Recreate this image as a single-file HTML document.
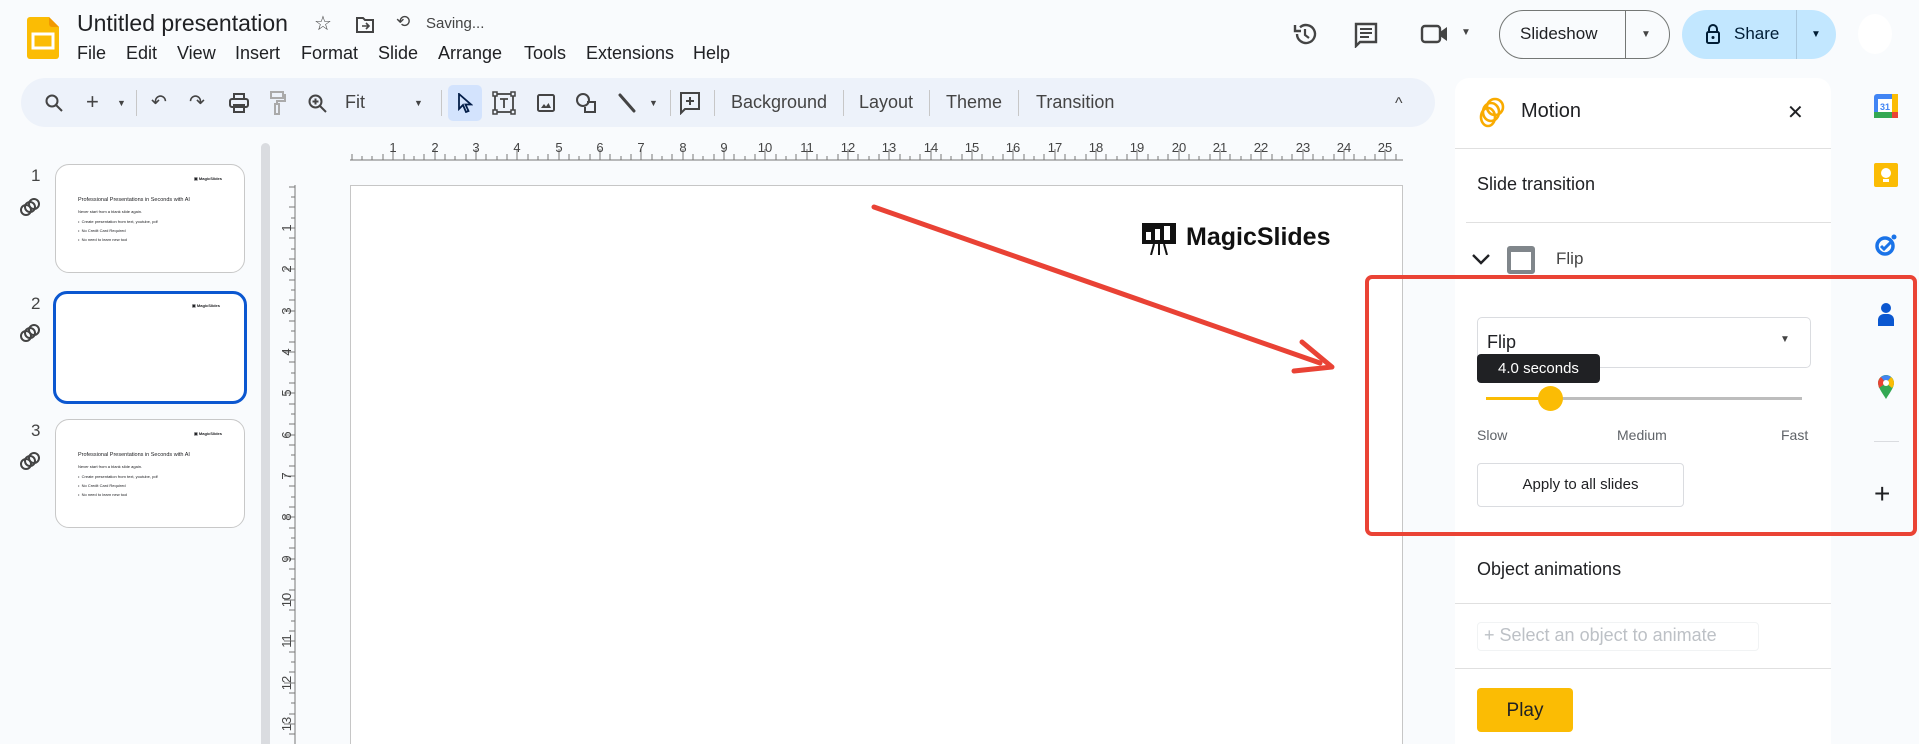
<!DOCTYPE html>
<html style="width:1919px;height:744px;overflow:hidden"><head><meta charset="utf-8"><style>
*{margin:0;padding:0;box-sizing:border-box}
body{width:1919px;height:744px;overflow:hidden;background:#f9fbfd;font-family:"Liberation Sans",Arial,sans-serif;color:#202124;position:relative}
.a{position:absolute}
.t{position:absolute;white-space:nowrap}
.m{position:absolute;top:43px;font-size:18px;color:#202124;white-space:nowrap}
.sep{position:absolute;top:90px;width:1px;height:26px;background:#c7c7c7}
.ic{position:absolute}
.thumb{position:absolute;left:55px;width:190px;height:109px;background:#fff;border:1px solid #c8c8c8;border-radius:14px;overflow:hidden}
.thumb .l{position:absolute;left:138px;top:11px;font-size:4px;font-weight:bold}
.thumb .h{position:absolute;left:22px;top:32px;font-size:5.5px}
.thumb .s{position:absolute;left:22px;font-size:4px}
.hr{position:absolute;left:1455px;width:376px;height:1px;background:#e0e0e0}
</style></head><body>

<svg class="a" style="left:27px;top:17px" width="32" height="42" viewBox="0 0 32 42"><path d="M3 0h19l10 10v29a3 3 0 0 1-3 3H3a3 3 0 0 1-3-3V3a3 3 0 0 1 3-3z" fill="#fbbc04"/><path d="M22 0l10 10h-7a3 3 0 0 1-3-3z" fill="#f29900"/><rect x="6" y="17" width="20" height="14" fill="none" stroke="#fff" stroke-width="3"/></svg>
<div class="t" style="left:77px;top:10px;font-size:23px;color:#202124">Untitled presentation</div>
<div class="t" style="left:314px;top:11px;font-size:20px;color:#444">☆</div>
<svg class="a" style="left:355px;top:16px" width="20" height="18" viewBox="0 0 20 18"><path d="M2 2h6l2 2h8v12H2z" fill="none" stroke="#444" stroke-width="2"/><path d="M7 10h6M11 7l3 3-3 3" stroke="#444" stroke-width="1.6" fill="none"/></svg>
<div class="t" style="left:396px;top:12px;font-size:17px;color:#444">⟲</div>
<div class="t" style="left:426px;top:15px;font-size:15px;color:#444">Saving...</div>
<div class="m" style="left:77px">File</div>
<div class="m" style="left:126px">Edit</div>
<div class="m" style="left:177px">View</div>
<div class="m" style="left:235px">Insert</div>
<div class="m" style="left:301px">Format</div>
<div class="m" style="left:378px">Slide</div>
<div class="m" style="left:438px">Arrange</div>
<div class="m" style="left:524px">Tools</div>
<div class="m" style="left:586px">Extensions</div>
<div class="m" style="left:693px">Help</div>

<svg class="a" style="left:1292px;top:21px" width="26" height="26" viewBox="0 0 26 26"><path d="M5 13a9 9 0 1 0 3-6.7" fill="none" stroke="#444" stroke-width="2.4"/><path d="M3 4v6h6" fill="none" stroke="#444" stroke-width="2.4"/><path d="M13 8v6l4 3" fill="none" stroke="#444" stroke-width="2.2"/></svg>
<svg class="a" style="left:1354px;top:22px" width="24" height="26" viewBox="0 0 24 26"><path d="M2 2h20v18H6l-4 4z" fill="none" stroke="#444" stroke-width="2.4"/><path d="M6 7h12M6 11h12M6 15h9" stroke="#444" stroke-width="2"/></svg>
<svg class="a" style="left:1420px;top:24px" width="34" height="20" viewBox="0 0 34 20"><rect x="2" y="2" width="18" height="16" rx="3" fill="none" stroke="#444" stroke-width="2.4"/><path d="M20 8l7-5v14l-7-5z" fill="#444"/></svg>
<div class="t" style="left:1461px;top:27px;font-size:10px;color:#444">▼</div>
<div class="a" style="left:1499px;top:10px;width:171px;height:49px;border:1px solid #747775;border-radius:25px"></div>
<div class="a" style="left:1625px;top:10px;width:1px;height:49px;background:#747775"></div>
<div class="t" style="left:1520px;top:24px;font-size:17px;color:#202124">Slideshow</div>
<div class="t" style="left:1641px;top:29px;font-size:10px;color:#444">▼</div>
<div class="a" style="left:1682px;top:10px;width:154px;height:49px;background:#c2e7ff;border-radius:25px"></div>
<div class="a" style="left:1796px;top:10px;width:1px;height:49px;background:#a8c7dd"></div>
<svg class="a" style="left:1705px;top:23px" width="16" height="22" viewBox="0 0 16 22"><path d="M4 9V6a4 4 0 0 1 8 0v3" fill="none" stroke="#001d35" stroke-width="2"/><rect x="2" y="9" width="12" height="11" rx="1.5" fill="none" stroke="#001d35" stroke-width="2"/><circle cx="8" cy="14.5" r="1.5" fill="#001d35"/></svg>
<div class="t" style="left:1734px;top:24px;font-size:17px;color:#001d35">Share</div>
<div class="t" style="left:1811px;top:29px;font-size:10px;color:#001d35">▼</div>
<div class="a" style="left:1858px;top:14px;width:34px;height:40px;border-radius:50%;background:#fff"></div>

<div class="a" style="left:21px;top:78px;width:1414px;height:49px;background:#edf2fa;border-radius:25px"></div>
<svg class="ic" style="left:45px;top:94px" width="18" height="18" viewBox="0 0 18 18"><circle cx="7" cy="7" r="5.5" fill="none" stroke="#444" stroke-width="2"/><path d="M11 11l6 6" stroke="#444" stroke-width="2"/></svg>
<div class="t" style="left:86px;top:89px;font-size:22px;color:#444">+</div>
<div class="t" style="left:117px;top:98px;font-size:9px;color:#444">▼</div>
<div class="sep" style="left:136px"></div>
<div class="t" style="left:151px;top:91px;font-size:19px;color:#444">↶</div>
<div class="t" style="left:189px;top:91px;font-size:19px;color:#444">↷</div>
<svg class="ic" style="left:229px;top:93px" width="20" height="20" viewBox="0 0 20 20"><rect x="5" y="1" width="10" height="5" fill="none" stroke="#444" stroke-width="2"/><rect x="1" y="6" width="18" height="8" rx="2" fill="none" stroke="#444" stroke-width="2"/><rect x="5" y="12" width="10" height="7" fill="none" stroke="#444" stroke-width="2"/></svg>
<svg class="ic" style="left:270px;top:91px" width="16" height="24" viewBox="0 0 16 24"><rect x="1" y="1" width="12" height="6" fill="none" stroke="#aaa" stroke-width="2"/><path d="M13 4h2v6H7v3" fill="none" stroke="#aaa" stroke-width="2"/><rect x="5" y="13" width="4" height="10" fill="none" stroke="#aaa" stroke-width="2"/></svg>
<svg class="ic" style="left:308px;top:94px" width="19" height="19" viewBox="0 0 19 19"><circle cx="7.5" cy="7.5" r="6" fill="none" stroke="#444" stroke-width="2"/><path d="M12 12l6 6M7.5 4.5v6M4.5 7.5h6" stroke="#444" stroke-width="2"/></svg>
<div class="t" style="left:345px;top:92px;font-size:18px;color:#444">Fit</div>
<div class="t" style="left:414px;top:98px;font-size:9px;color:#444">▼</div>
<div class="sep" style="left:441px"></div>
<div class="a" style="left:448px;top:85px;width:34px;height:36px;background:#d3e3fd;border-radius:5px"></div>
<svg class="ic" style="left:457px;top:93px" width="16" height="20" viewBox="0 0 16 20"><path d="M2 1v15l4-4 3 7 2.5-1-3-6.5H14z" fill="none" stroke="#041e49" stroke-width="1.8"/></svg>
<svg class="ic" style="left:492px;top:91px" width="24" height="24" viewBox="0 0 24 24"><rect x="3" y="3" width="18" height="18" fill="none" stroke="#444" stroke-width="1.8"/><rect x="1" y="1" width="4" height="4" fill="#edf2fa" stroke="#444" stroke-width="1.5"/><rect x="19" y="1" width="4" height="4" fill="#edf2fa" stroke="#444" stroke-width="1.5"/><rect x="1" y="19" width="4" height="4" fill="#edf2fa" stroke="#444" stroke-width="1.5"/><rect x="19" y="19" width="4" height="4" fill="#edf2fa" stroke="#444" stroke-width="1.5"/><path d="M8 8h8M12 8v9" stroke="#444" stroke-width="1.8"/></svg>
<svg class="ic" style="left:536px;top:93px" width="20" height="20" viewBox="0 0 20 20"><rect x="2" y="2" width="16" height="16" rx="1.5" fill="none" stroke="#444" stroke-width="2"/><path d="M5 15l3-4 2 2.5 2.5-3.5L15 15z" fill="#444"/></svg>
<svg class="ic" style="left:575px;top:92px" width="22" height="22" viewBox="0 0 22 22"><circle cx="8" cy="8" r="6" fill="none" stroke="#444" stroke-width="2"/><path d="M12 10h8v10h-10v-5" fill="none" stroke="#444" stroke-width="2"/></svg>
<svg class="ic" style="left:617px;top:92px" width="20" height="22" viewBox="0 0 20 22"><path d="M3 3l14 16" stroke="#444" stroke-width="3" stroke-linecap="round"/></svg>
<div class="t" style="left:649px;top:98px;font-size:9px;color:#444">▼</div>
<div class="sep" style="left:670px"></div>
<svg class="ic" style="left:679px;top:91px" width="22" height="24" viewBox="0 0 22 24"><path d="M2 2h18v16H6l-4 4z" fill="none" stroke="#444" stroke-width="2"/><path d="M11 6v8M7 10h8" stroke="#444" stroke-width="2"/></svg>
<div class="sep" style="left:714px"></div>
<div class="t" style="left:731px;top:92px;font-size:18px;color:#444">Background</div>
<div class="sep" style="left:843px"></div>
<div class="t" style="left:859px;top:92px;font-size:18px;color:#444">Layout</div>
<div class="sep" style="left:929px"></div>
<div class="t" style="left:946px;top:92px;font-size:18px;color:#444">Theme</div>
<div class="sep" style="left:1018px"></div>
<div class="t" style="left:1036px;top:92px;font-size:18px;color:#444">Transition</div>
<div class="t" style="left:1395px;top:95px;font-size:16px;color:#444">^</div>

<div class="t" style="left:31px;top:166px;font-size:17px;color:#444">1</div>
<div class="t" style="left:31px;top:294px;font-size:17px;color:#444">2</div>
<div class="t" style="left:31px;top:421px;font-size:17px;color:#444">3</div>
<svg class="a" style="left:19px;top:197px" width="22" height="20" viewBox="0 0 22 20"><g fill="none" stroke="#444" stroke-width="2"><circle cx="7" cy="13" r="5"/><circle cx="11" cy="10" r="5"/><circle cx="15" cy="7" r="5"/></g></svg>
<svg class="a" style="left:19px;top:323px" width="22" height="20" viewBox="0 0 22 20"><g fill="none" stroke="#444" stroke-width="2"><circle cx="7" cy="13" r="5"/><circle cx="11" cy="10" r="5"/><circle cx="15" cy="7" r="5"/></g></svg>
<svg class="a" style="left:19px;top:451px" width="22" height="20" viewBox="0 0 22 20"><g fill="none" stroke="#444" stroke-width="2"><circle cx="7" cy="13" r="5"/><circle cx="11" cy="10" r="5"/><circle cx="15" cy="7" r="5"/></g></svg>
<div class="thumb" style="top:164px"><div class="l">▣ MagicSlides</div><div class="h">Professional Presentations in Seconds with AI</div><div class="s" style="top:44px">Never start from a blank slide again.</div><div class="s" style="top:54px">•&nbsp; Create presentation from text, youtube, pdf</div><div class="s" style="top:63px">•&nbsp; No Credit Card Required</div><div class="s" style="top:72px">•&nbsp; No need to learn new tool</div></div>
<div class="thumb" style="top:291px;border:3px solid #0b57d0;left:53px;width:194px;height:113px"><div class="l" style="top:9px;left:136px">▣ MagicSlides</div></div>
<div class="thumb" style="top:419px"><div class="l">▣ MagicSlides</div><div class="h">Professional Presentations in Seconds with AI</div><div class="s" style="top:44px">Never start from a blank slide again.</div><div class="s" style="top:54px">•&nbsp; Create presentation from text, youtube, pdf</div><div class="s" style="top:63px">•&nbsp; No Credit Card Required</div><div class="s" style="top:72px">•&nbsp; No need to learn new tool</div></div>
<div class="a" style="left:261px;top:143px;width:9px;height:601px;background:#dadce0;border-radius:5px 5px 0 0"></div>

<svg class="a" style="left:270px;top:130px" width="1190" height="614">
<g stroke="#777" stroke-width="1">
<line x1="80" y1="30" x2="1133" y2="30"/>
<line x1="25" y1="55" x2="25" y2="614"/>
</g>
<g stroke="#777">
<path d="M82 30v-6M92 30v-4M102 30v-4M113 30v-6M123 30v-11M134 30v-6M144 30v-4M154 30v-6M165 30v-11M175 30v-6M185 30v-4M196 30v-6M206 30v-11M216 30v-6M227 30v-4M237 30v-6M247 30v-11M258 30v-6M268 30v-4M278 30v-6M289 30v-11M299 30v-6M309 30v-4M320 30v-6M330 30v-11M340 30v-6M351 30v-4M361 30v-6M371 30v-11M382 30v-6M392 30v-4M402 30v-6M413 30v-11M423 30v-6M433 30v-4M444 30v-6M454 30v-11M464 30v-6M475 30v-4M485 30v-6M495 30v-11M506 30v-6M516 30v-4M526 30v-6M537 30v-11M547 30v-6M557 30v-4M568 30v-6M578 30v-11M588 30v-6M599 30v-4M609 30v-6M619 30v-11M630 30v-6M640 30v-4M650 30v-6M661 30v-11M671 30v-6M681 30v-4M692 30v-6M702 30v-11M712 30v-6M723 30v-4M733 30v-6M743 30v-11M754 30v-6M764 30v-4M774 30v-6M785 30v-11M795 30v-6M805 30v-4M816 30v-6M826 30v-11M836 30v-6M847 30v-4M857 30v-6M867 30v-11M878 30v-6M888 30v-4M898 30v-6M909 30v-11M919 30v-6M929 30v-4M940 30v-6M950 30v-11M960 30v-6M971 30v-4M981 30v-6M991 30v-11M1002 30v-6M1012 30v-4M1022 30v-6M1033 30v-11M1043 30v-6M1053 30v-4M1064 30v-6M1074 30v-11M1084 30v-6M1095 30v-4M1105 30v-6M1115 30v-11M1126 30v-6"/>
</g>
<g font-size="13" fill="#444" font-family="Liberation Sans" text-anchor="middle">
<text x="123" y="22">1</text><text x="165" y="22">2</text><text x="206" y="22">3</text><text x="247" y="22">4</text><text x="289" y="22">5</text><text x="330" y="22">6</text><text x="371" y="22">7</text><text x="413" y="22">8</text><text x="454" y="22">9</text><text x="495" y="22">10</text><text x="537" y="22">11</text><text x="578" y="22">12</text><text x="619" y="22">13</text><text x="661" y="22">14</text><text x="702" y="22">15</text><text x="743" y="22">16</text><text x="785" y="22">17</text><text x="826" y="22">18</text><text x="867" y="22">19</text><text x="909" y="22">20</text><text x="950" y="22">21</text><text x="991" y="22">22</text><text x="1033" y="22">23</text><text x="1074" y="22">24</text><text x="1115" y="22">25</text>
</g>
<g stroke="#777">
<path d="M25 57h-6M25 67h-4M25 77h-6M25 88h-4M25 98h-11M25 108h-6M25 119h-4M25 129h-6M25 139h-11M25 150h-6M25 160h-4M25 170h-6M25 181h-11M25 191h-6M25 201h-4M25 212h-6M25 222h-11M25 232h-6M25 243h-4M25 253h-6M25 263h-11M25 274h-6M25 284h-4M25 294h-6M25 305h-11M25 315h-6M25 325h-4M25 336h-6M25 346h-11M25 356h-6M25 367h-4M25 377h-6M25 387h-11M25 398h-6M25 408h-4M25 418h-6M25 429h-11M25 439h-6M25 449h-4M25 460h-6M25 470h-11M25 480h-6M25 491h-4M25 501h-6M25 511h-11M25 522h-6M25 532h-4M25 542h-6M25 553h-11M25 563h-6M25 573h-4M25 584h-6M25 594h-11M25 604h-6"/>
</g>
<g font-size="13" fill="#444" font-family="Liberation Sans" text-anchor="middle">
<text transform="translate(17,98) rotate(-90)" y="4">1</text><text transform="translate(17,139) rotate(-90)" y="4">2</text><text transform="translate(17,181) rotate(-90)" y="4">3</text><text transform="translate(17,222) rotate(-90)" y="4">4</text><text transform="translate(17,263) rotate(-90)" y="4">5</text><text transform="translate(17,305) rotate(-90)" y="4">6</text><text transform="translate(17,346) rotate(-90)" y="4">7</text><text transform="translate(17,387) rotate(-90)" y="4">8</text><text transform="translate(17,429) rotate(-90)" y="4">9</text><text transform="translate(17,470) rotate(-90)" y="4">10</text><text transform="translate(17,511) rotate(-90)" y="4">11</text><text transform="translate(17,553) rotate(-90)" y="4">12</text><text transform="translate(17,594) rotate(-90)" y="4">13</text>
</g>
</svg>

<div class="a" style="left:350px;top:185px;width:1053px;height:559px;background:#fff;border:1px solid #c6c6c6;border-bottom:none"></div>
<svg class="a" style="left:1142px;top:223px" width="34" height="32" viewBox="0 0 34 32"><rect x="0" y="0" width="34" height="21" fill="#111"/><rect x="4" y="9" width="5" height="8" fill="#fff"/><rect x="13" y="6" width="5" height="11" fill="#fff"/><rect x="22" y="3" width="6" height="14" fill="#fff"/><path d="M12 21l-3 11M17 21v11M22 21l3 11" stroke="#111" stroke-width="2"/></svg>
<div class="t" style="left:1186px;top:223px;font-size:25px;font-weight:bold;color:#111">MagicSlides</div>

<svg class="a" style="left:0;top:0" width="1919" height="744"><line x1="874" y1="207" x2="1320" y2="363" stroke="#e94235" stroke-width="5" stroke-linecap="round"/><path d="M1302 342l30 25-38 4" fill="none" stroke="#e94235" stroke-width="5" stroke-linecap="round" stroke-linejoin="round"/></svg>

<div class="a" style="left:1455px;top:78px;width:376px;height:666px;background:#fff;border-radius:14px 14px 0 0"></div>
<svg class="a" style="left:1478px;top:97px" width="28" height="32" viewBox="0 0 28 32"><g fill="none" stroke="#f9ab00" stroke-width="2.6"><ellipse cx="17" cy="10" rx="8" ry="8"/><ellipse cx="13" cy="15" rx="8" ry="9"/><ellipse cx="10" cy="20" rx="7" ry="9"/></g></svg>
<div class="t" style="left:1521px;top:100px;font-size:20px;color:#202124">Motion</div>
<div class="t" style="left:1787px;top:100px;font-size:20px;color:#202124">✕</div>
<div class="hr" style="top:148px"></div>
<div class="t" style="left:1477px;top:174px;font-size:18px;color:#202124">Slide transition</div>
<div class="hr" style="top:222px;left:1466px;width:365px"></div>
<svg class="a" style="left:1471px;top:253px" width="20" height="12" viewBox="0 0 20 12"><path d="M2 2l8 8 8-8" fill="none" stroke="#202124" stroke-width="2.4"/></svg>
<div class="a" style="left:1507px;top:246px;width:28px;height:28px;border:4px solid #80868b;border-top-width:6px;border-radius:3px"></div>
<div class="t" style="left:1556px;top:249px;font-size:17px;color:#444">Flip</div>
<div class="a" style="left:1477px;top:317px;width:334px;height:51px;border:1px solid #dadce0;border-radius:5px"></div>
<div class="t" style="left:1487px;top:332px;font-size:18px;color:#202124">Flip</div>
<div class="t" style="left:1780px;top:334px;font-size:10px;color:#444">▼</div>
<div class="a" style="left:1486px;top:397px;width:316px;height:3px;background:#bdbdbd"></div>
<div class="a" style="left:1486px;top:397px;width:64px;height:3px;background:#fbbc04"></div>
<div class="a" style="left:1538px;top:386px;width:25px;height:25px;border-radius:50%;background:#fbbc04"></div>
<div class="a" style="left:1477px;top:354px;width:123px;height:29px;background:#202124;border-radius:4px"></div>
<div class="t" style="left:1477px;top:360px;width:123px;text-align:center;font-size:15px;color:#fff">4.0 seconds</div>
<div class="t" style="left:1477px;top:427px;font-size:14px;color:#5f6368">Slow</div>
<div class="t" style="left:1617px;top:427px;font-size:14px;color:#5f6368">Medium</div>
<div class="t" style="left:1781px;top:427px;font-size:14px;color:#5f6368">Fast</div>
<div class="a" style="left:1477px;top:463px;width:207px;height:44px;border:1px solid #dadce0;border-radius:4px"></div>
<div class="t" style="left:1477px;top:476px;width:207px;text-align:center;font-size:15px;color:#202124">Apply to all slides</div>
<div class="hr" style="top:534px"></div>
<div class="t" style="left:1477px;top:559px;font-size:18px;color:#202124">Object animations</div>
<div class="hr" style="top:603px"></div>
<div class="a" style="left:1477px;top:622px;width:282px;height:29px;border:1px solid #f1f3f4;border-radius:4px"></div>
<div class="t" style="left:1484px;top:625px;font-size:18px;color:#bdc1c6">+ Select an object to animate</div>
<div class="hr" style="top:668px"></div>
<div class="a" style="left:1477px;top:688px;width:96px;height:44px;background:#fbbc04;border-radius:4px"></div>
<div class="t" style="left:1477px;top:700px;width:96px;text-align:center;font-size:19px;color:#202124">Play</div>

<svg class="a" style="left:1874px;top:94px" width="24" height="24" viewBox="0 0 24 24"><rect x="0" y="0" width="24" height="24" rx="3" fill="#4285f4"/><rect x="0" y="18" width="24" height="6" fill="#34a853"/><rect x="18" y="0" width="6" height="18" fill="#fbbc04"/><rect x="18" y="18" width="6" height="6" fill="#ea4335"/><rect x="4" y="5" width="14" height="13" fill="#fff"/><text x="11" y="16" font-size="9" fill="#4285f4" text-anchor="middle" font-family="Liberation Sans" font-weight="bold">31</text></svg>
<div class="a" style="left:1874px;top:163px;width:24px;height:24px;background:#fbbc04;border-radius:2px"></div>
<div class="a" style="left:1881px;top:168px;width:10px;height:10px;border-radius:50%;background:#fff"></div>
<div class="a" style="left:1883px;top:179px;width:6px;height:3px;background:#fff"></div>
<svg class="a" style="left:1874px;top:233px" width="24" height="24" viewBox="0 0 24 24"><circle cx="11" cy="13" r="8" fill="none" stroke="#1a73e8" stroke-width="3.5"/><path d="M7 13l3 3 7-7" fill="none" stroke="#1a73e8" stroke-width="3"/><circle cx="20" cy="4" r="2.5" fill="#1a73e8"/></svg>
<svg class="a" style="left:1876px;top:302px" width="20" height="26" viewBox="0 0 20 26"><circle cx="10" cy="6" r="5" fill="#0b57d0"/><path d="M2 24v-6a6 6 0 0 1 6-6h4a6 6 0 0 1 6 6v6z" fill="#0b57d0"/></svg>
<svg class="a" style="left:1877px;top:374px" width="18" height="26" viewBox="0 0 18 26"><path d="M9 25C4 17 1 13 1 9a8 8 0 0 1 16 0c0 4-3 8-8 16z" fill="#34a853"/><path d="M1 9a8 8 0 0 1 3-6l5 6-7 5z" fill="#ea4335"/><path d="M4 3a8 8 0 0 1 10 0l-5 6z" fill="#4285f4"/><path d="M14 3a8 8 0 0 1 3 6c0 2-1 4-2 5l-6-5z" fill="#fbbc04"/><circle cx="9" cy="9" r="3" fill="#fff"/></svg>
<div class="a" style="left:1874px;top:441px;width:25px;height:1px;background:#dadce0"></div>
<div class="t" style="left:1874px;top:480px;font-size:28px;color:#202124;line-height:28px">+</div>

<div class="a" style="left:1365px;top:275px;width:552px;height:261px;border:4px solid #ea4335;border-radius:7px"></div>
</body></html>
